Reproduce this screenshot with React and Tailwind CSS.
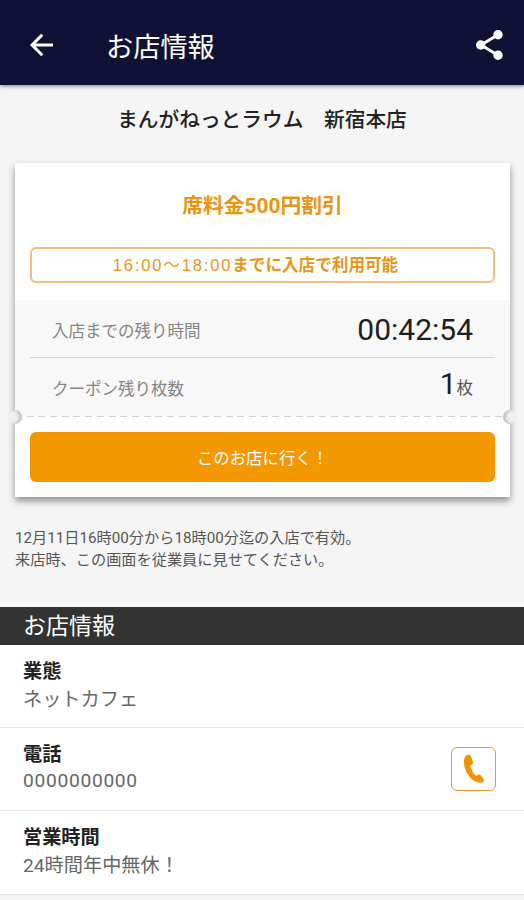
const details = [
  { label: "業態", value: "ネットカフェ" },
  { label: "電話", value: "0000000000", phone: true },
  { label: "営業時間", value: "24時間年中無休！" },
];

function BackIcon() {
  return (
    <svg width="34" height="34" viewBox="0 0 34 34" fill="none" stroke="currentColor" strokeWidth="3">
      <path d="M29 17H8.500M18.300 6.800 8.100 17l10.200 10.200" />
    </svg>
  );
}

function ShareIcon() {
  return (
    <svg width="36" height="36" viewBox="0 0 36 36" fill="currentColor">
      <path d="M27 7.800 10 18l17 10.200" fill="none" stroke="currentColor" strokeWidth="3" />
      <circle cx="27" cy="7.800" r="4.700" />
      <circle cx="9.700" cy="18" r="4.700" />
      <circle cx="27" cy="28.200" r="4.700" />
    </svg>
  );
}

function PhoneButton() {
  return (
    <button type="button" aria-label="電話をかける" className="flex h-11 w-[45px] items-center justify-center rounded-md border border-[#eb9a2a]">
      <svg width="22" height="30" viewBox="0 0 22 30" fill="#f09300">
        <path d="M5 .8C2.300 1.300 1 4 1 8.200c0 4.600 1.500 9.200 4.600 13.300 3.300 4.500 7.400 7.100 11.700 7.100 1.900 0 3.300-.6 3.700-1.700.2-.6 0-1.100-.4-1.600L17.300 21c-.5-.6-1.200-.7-1.800-.4l-1.900.8c-.6.200-1.100 0-1.600-.5-2-2-3.700-5-4.400-8.200-.1-.8 0-1.300.5-1.700l1.600-1.300c.5-.4.6-.9.400-1.600L8 2.400C7.500 1.100 6.400.5 5 .8z" />
      </svg>
    </button>
  );
}

function Coupon() {
  return (
    <section className="relative mr-[14px] ml-[15px] h-[334px] bg-white pt-7 shadow-[0_4px_7px_rgba(0,0,0,0.42)]">
      <h2 className="text-center text-[20.8px] leading-[30px] font-bold text-[#e9960f]">席料金500円割引</h2>

      <div className="mx-[15px] mt-[26px] flex h-9 items-center justify-center rounded-md border-2 border-[#f3bd80] pt-0.5 pr-[14px] text-[16.6px] font-bold text-[#e8951a]">
        <span className="font-['Liberation_Sans','Noto_Sans_CJK_JP',sans-serif] font-normal tracking-[1.8px]">16:00〜18:00</span>
        <span>までに入店で利用可能</span>
      </div>

      <dl className="mt-[17px] bg-[#f8f8f8] px-[15px]">
        <div className="flex h-[58px] items-center justify-between border-b border-[#d4d4d4] px-[22px]">
          <dt className="pt-[7px] text-[16.5px] text-[#858585]">入店までの残り時間</dt>
          <dd className="pt-0.5 text-[30px] text-[#1e1e1e]">00:42:54</dd>
        </div>
        <div className="flex h-[58px] items-center justify-between px-[22px]">
          <dt className="pt-[7px] text-[16.5px] text-[#858585]">クーポン残り枚数</dt>
          <dd className="flex items-baseline pb-[7px] text-[30px] leading-none text-[#1e1e1e]">
            1<span className="text-[16.5px] text-[#555]">枚</span>
          </dd>
        </div>
      </dl>

      {/* perforation */}
      <div className="h-px bg-[repeating-linear-gradient(90deg,#d0d0d0_0_7px,transparent_7px_11.700px)]" />
      <div className="absolute top-[247px] -left-[7px] h-[14px] w-[14px] rounded-full bg-[#f0f0f0] shadow-[inset_-3px_0_3px_#c4c4c4]" />
      <div className="absolute top-[247px] -right-[7px] h-[14px] w-[14px] rounded-full bg-[#f0f0f0] shadow-[inset_3px_0_3px_#c4c4c4]" />

      <div className="px-[15px] pt-[15px]">
        <button type="button" className="h-[50px] w-full rounded-md bg-[#f39800] pt-[5px] text-[16.4px] text-white">このお店に行く！</button>
      </div>
    </section>
  );
}

export default function App() {
  return (
    <div className="h-[900px] w-full overflow-hidden bg-[#f5f5f5] font-[Roboto,'Noto_Sans_CJK_JP',sans-serif]">
      <header className="flex h-[85px] items-center bg-[#101235] px-[26px] pt-[5px] pr-[17px] text-white shadow-[0_1px_4px_rgba(0,0,0,0.5)]">
        <div className="-ml-0.5">
          <BackIcon />
        </div>
        <h1 className="ml-[48px] flex-1 pt-[7px] text-[27.2px] leading-none">お店情報</h1>
        <ShareIcon />
      </header>

      <p className="pt-5 pb-7 text-center text-[20.7px] leading-[30px] font-medium text-[#222]">まんがねっとラウム　新宿本店</p>

      <Coupon />

      <p className="mt-[30px] px-[15px] text-[15.2px] leading-[22px] text-[#555]">
        12月11日16時00分から18時00分迄の入店で有効。
        <br />
        来店時、この画面を従業員に見せてください。
      </p>

      <h2 className="mt-9 h-[38px] bg-[#333] px-[23px] text-[23px] leading-[39px] text-white">お店情報</h2>

      <ul className="bg-white">
        {details.map(({ label, value, phone }) => (
          <li key={label} className="flex h-[83.200px] items-center justify-between border-b border-[#e5e5e5] pr-[28px] pl-[23px]">
            <div>
              <h3 className="text-[19.2px] leading-[26px] font-bold text-[#222]">{label}</h3>
              <p className={`text-[19.2px] text-[#666] ${phone ? "pb-[3px] leading-[26px] tracking-[0.7px]" : "leading-[29px]"}`}>{value}</p>
            </div>
            {phone && <PhoneButton />}
          </li>
        ))}
      </ul>
    </div>
  );
}
